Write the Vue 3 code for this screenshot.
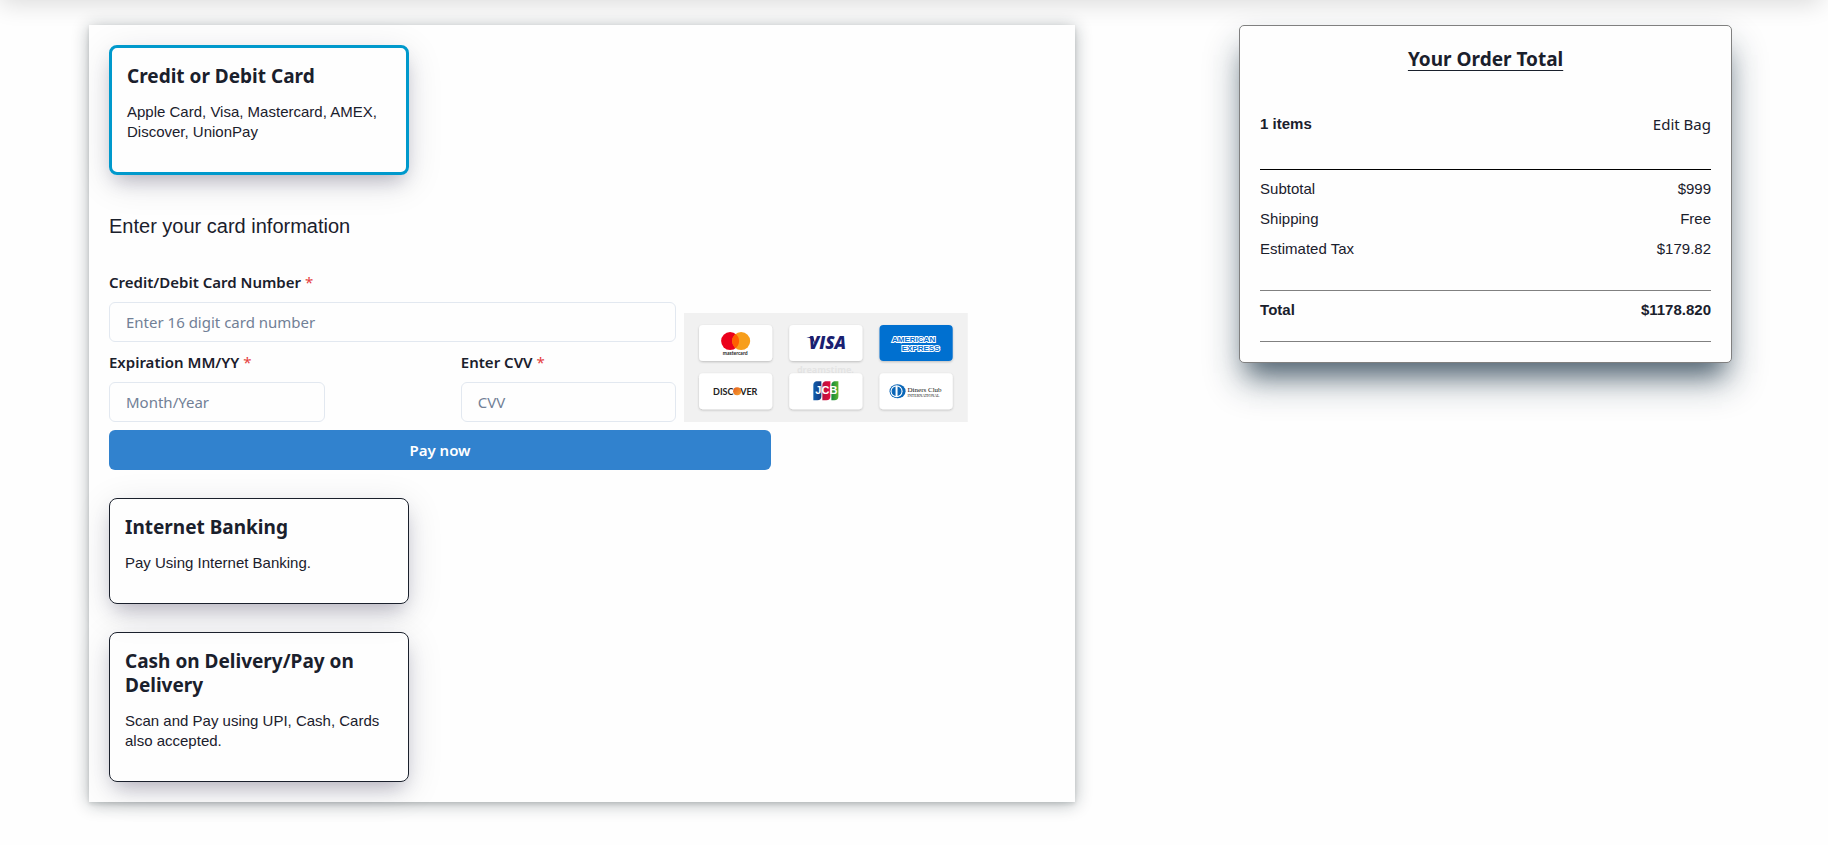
<script setup>
const summary = [
  { label: 'Subtotal', value: '$999' },
  { label: 'Shipping', value: 'Free' },
  { label: 'Estimated Tax', value: '$179.82' },
]
</script>

<template>
  <div class="page">
    <div class="topbar"></div>
    <main class="checkout">
      <section class="payment">
        <article class="method selected">
          <h2>Credit or Debit Card</h2>
          <p>Apple Card, Visa, Mastercard, AMEX, Discover, UnionPay</p>
        </article>

        <form class="card-form" @submit.prevent>
          <p class="lead">Enter your card information</p>
          <div class="entry">
            <div class="fields">
              <div class="field">
                <label for="number">Credit/Debit Card Number <span class="req">*</span></label>
                <input id="number" type="text" placeholder="Enter 16 digit card number" />
              </div>
              <div class="pair">
                <div class="field">
                  <label for="expiry">Expiration MM/YY <span class="req">*</span></label>
                  <input id="expiry" type="text" placeholder="Month/Year" />
                </div>
                <div class="field">
                  <label for="cvv">Enter CVV <span class="req">*</span></label>
                  <input id="cvv" type="text" placeholder="CVV" />
                </div>
              </div>
            </div>
            <svg class="brands" viewBox="0 0 283 109" role="img" aria-label="Accepted cards">
              <defs>
                <filter id="soft" x="-10%" y="-10%" width="120%" height="130%">
                  <feDropShadow dx="0" dy="1" stdDeviation="1" flood-color="#000" flood-opacity="0.22" />
                </filter>
                <linearGradient id="orange" x1="0" y1="0" x2="1" y2="1">
                  <stop offset="0" stop-color="#e25a1c" />
                  <stop offset="1" stop-color="#f9a533" />
                </linearGradient>
                <linearGradient id="jblue"><stop offset="0" stop-color="#0f5fae" /><stop offset="1" stop-color="#143a80" /></linearGradient>
                <linearGradient id="jred"><stop offset="0" stop-color="#b5123e" /><stop offset="1" stop-color="#e30b3c" /></linearGradient>
                <linearGradient id="jgreen"><stop offset="0" stop-color="#12873a" /><stop offset="1" stop-color="#5cb531" /></linearGradient>
              </defs>
              <rect width="283" height="109" fill="#f1f1f1" />
              <text class="mark" x="141" y="60" text-anchor="middle">dreamstime.</text>
              <g filter="url(#soft)" fill="#fff">
                <rect x="15" y="12" width="73" height="36" rx="4" />
                <rect x="105" y="12" width="73" height="36" rx="4" />
                <rect x="195" y="12" width="73" height="36" rx="4" fill="#016fd0" />
                <rect x="15" y="60" width="73" height="36" rx="4" />
                <rect x="105" y="60" width="73" height="36" rx="4" />
                <rect x="195" y="60" width="73" height="36" rx="4" />
              </g>
              <circle cx="46" cy="28" r="9" fill="#eb001b" />
              <circle cx="57" cy="28" r="9" fill="#f79e1b" />
              <path d="M51.500 20.900a9 9 0 0 1 0 14.200a9 9 0 0 1 0-14.200z" fill="#ff5f00" />
              <text class="mc" x="51" y="42" text-anchor="middle">mastercard</text>
              <text class="visa" x="143" y="36" text-anchor="middle">VISA</text>
              <path d="M122 24h7l2 7c-2-3-4-6-9-7z" fill="#1a1f71" />
              <text class="amex" x="229" y="29" text-anchor="middle">AMERICAN</text>
              <text class="amex" x="236" y="38" text-anchor="middle">EXPRESS</text>
              <text class="disc" x="29" y="82">DISC</text>
              <text class="disc" x="56" y="82">VER</text>
              <circle cx="53" cy="78" r="4" fill="url(#orange)" />
              <path d="M132 68h5v15a4 4 0 0 1-4 4h-4V72a4 4 0 0 1 3-4z" fill="url(#jblue)" />
              <path d="M141 68h5v15a4 4 0 0 1-4 4h-4V72a4 4 0 0 1 3-4z" fill="url(#jred)" />
              <path d="M150 68h4v15a4 4 0 0 1-4 4h-3V72a4 4 0 0 1 3-4z" fill="url(#jgreen)" />
              <text class="jcb" x="142" y="81" text-anchor="middle">JCB</text>
              <ellipse cx="213" cy="78" rx="8" ry="7" fill="#0a66b7" />
              <circle cx="212" cy="78" r="6" fill="#fff" />
              <path d="M210.500 74a4.200 4.200 0 0 0 0 8zM213.500 74a4.200 4.200 0 0 1 0 8z" fill="#0a66b7" stroke="#0a66b7" />
              <text class="diners" x="223" y="79">Diners Club</text>
              <text class="intl" x="223" y="84">INTERNATIONAL</text>
            </svg>
          </div>
          <button class="pay" type="submit">Pay now</button>
        </form>

        <article class="method">
          <h2>Internet Banking</h2>
          <p>Pay Using Internet Banking.</p>
        </article>
        <article class="method">
          <h2>Cash on Delivery/Pay on Delivery</h2>
          <p>Scan and Pay using UPI, Cash, Cards also accepted.</p>
        </article>
      </section>

      <aside class="order">
        <h2>Your Order Total</h2>
        <div class="bag">
          <strong>1 items</strong>
          <a href="#">Edit Bag</a>
        </div>
        <dl class="lines">
          <div v-for="row in summary" :key="row.label">
            <dt>{{ row.label }}</dt>
            <dd>{{ row.value }}</dd>
          </div>
        </dl>
        <dl class="total">
          <div>
            <dt>Total</dt>
            <dd>$1178.820</dd>
          </div>
        </dl>
      </aside>
    </main>
  </div>
</template>

<style>
body {
  background: #fefefe;
}
</style>

<style scoped>
* {
  box-sizing: border-box;
}
.page {
  position: relative;
  padding: 25px 96px 43px 89px;
  color: #1a202c;
  font-family: 'Noto Sans', 'Open Sans', sans-serif;
  font-size: 15px;
  line-height: 24px;
}
.topbar {
  position: absolute;
  top: -60px;
  left: 0;
  right: 7px;
  height: 60px;
  box-shadow: 0 4px 24px rgba(0, 0, 0, 0.14);
}
.checkout {
  position: relative;
  display: flex;
  justify-content: space-between;
  align-items: flex-start;
}
h2 {
  margin: 0;
  font-size: 19px;
  line-height: 24px;
  font-weight: 700;
}
.payment {
  width: 60%;
  padding: 20px;
  display: flex;
  flex-direction: column;
  gap: 28px;
  background: #fefefe;
  box-shadow: rgba(14, 30, 37, 0.12) 0 2px 4px, rgba(14, 30, 37, 0.32) 0 2px 16px;
}
.method {
  width: 300px;
  padding: 16px 15px 30px;
  border: 1px solid #1a202c;
  border-radius: 8px;
  box-shadow: rgba(17, 12, 46, 0.26) 0 10px 20px -6px, rgba(17, 12, 46, 0.12) 0 8px 36px;
}
.method.selected {
  border: 3px solid #0099cc;
}
.method p {
  margin: 14px 0 0;
  font-family: 'Liberation Sans', Arial, sans-serif;
  font-size: 15px;
  line-height: 20px;
}
.card-form {
  display: flex;
  flex-direction: column;
  gap: 8px;
}
.lead {
  margin: 8px 0 21px;
  font-family: 'Liberation Sans', Arial, sans-serif;
  font-size: 20px;
  line-height: 30px;
}
.entry {
  display: flex;
  align-items: flex-end;
  gap: 8px;
}
.fields {
  width: 60%;
  display: flex;
  flex-direction: column;
  gap: 8px;
}
.pair {
  display: flex;
  justify-content: space-between;
}
.pair .field {
  width: 38%;
}
.field {
  display: flex;
  flex-direction: column;
  gap: 8px;
}
label {
  font-weight: 600;
}
.req {
  color: #e53e3e;
  font-weight: 400;
}
input {
  width: 100%;
  height: 40px;
  padding: 0 16px;
  border: 1px solid #e2e8f0;
  border-radius: 6px;
  background: transparent;
  color: inherit;
  font: inherit;
}
input::placeholder {
  color: #718096;
}
.brands {
  width: 30%;
  display: block;
}
.mark {
  font: 700 9px 'Noto Sans', sans-serif;
  fill: #e4e4e4;
}
.mc {
  font: 700 5px 'Lato', sans-serif;
  fill: #222;
}
.visa {
  font: italic 800 17px 'Open Sans', sans-serif;
  fill: #1a1f71;
}
.amex {
  font: 700 8px 'Liberation Sans', sans-serif;
  fill: #016fd0;
  stroke: #fff;
  stroke-width: 2px;
  paint-order: stroke;
}
.disc {
  font: 700 9px 'Lato', sans-serif;
  fill: #222;
}
.jcb {
  font: 700 11px 'Liberation Sans', sans-serif;
  fill: #fff;
}
.diners {
  font: 7px 'Liberation Serif', serif;
  fill: #111;
}
.intl {
  font: 4px 'Liberation Serif', serif;
  fill: #111;
}
.pay {
  width: 70%;
  height: 40px;
  border: 0;
  border-radius: 6px;
  background: #3182ce;
  color: #fff;
  font: inherit;
  font-weight: 600;
}
.order {
  width: 30%;
  padding: 20px;
  border: 1px solid #808080;
  border-radius: 5px;
  background: #fefefe;
  box-shadow: rgba(17, 42, 62, 0.6) 0 20px 24px -10px, rgba(17, 42, 62, 0.32) 0 20px 36px;
  font-family: 'Liberation Sans', Arial, sans-serif;
}
.order h2 {
  text-align: center;
  text-decoration: underline;
  text-decoration-thickness: 1px;
  text-underline-offset: 4px;
  font-family: 'Noto Sans', 'Open Sans', sans-serif;
  line-height: 26px;
}
.bag {
  display: flex;
  justify-content: space-between;
  padding: 40px 0 33px;
  border-bottom: 1px solid #000;
}
.bag a {
  color: inherit;
  text-decoration: none;
  font-family: 'Noto Sans', 'Open Sans', sans-serif;
}
dl {
  margin: 0;
  border-bottom: 1px solid #808080;
}
dl div {
  display: flex;
  justify-content: space-between;
}
dd {
  margin: 0;
}
.lines {
  padding: 4px 0 26px;
  line-height: 30px;
}
.total {
  padding: 4px 0 16px;
  font-weight: 700;
  line-height: 30px;
}
</style>
